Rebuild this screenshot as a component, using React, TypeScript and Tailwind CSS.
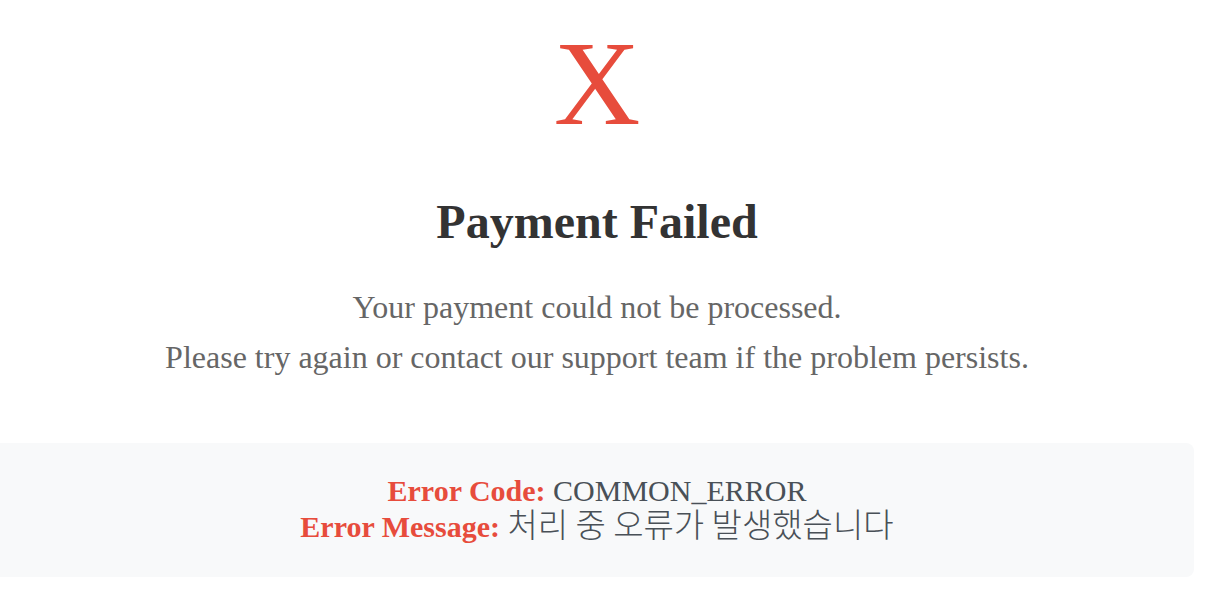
export default function App() {
  return (
    <div className="w-[1194px] bg-white text-center font-['Liberation_Serif','Noto_Sans_CJK_KR',serif]">
      <div className="mt-[24px] text-[120px] leading-none text-[#e74c3c]">X</div>

      <h1 className="mt-[54px] text-[48px] font-bold leading-none text-[#333333]">Payment Failed</h1>

      <p className="mt-[36px] text-[32px] leading-[50px] text-[#666666]">
        Your payment could not be processed.
        <br />
        Please try again or contact our support team if the problem persists.
      </p>

      <div className="mt-[61px] rounded-r-lg bg-[#f8f9fa] pt-[30px] pb-[32px] text-[30px] leading-[36px] text-[#495057]">
        <div>
          <span className="font-bold text-[#e74c3c]">Error Code:</span> COMMON_ERROR
        </div>
        <div>
          <span className="font-bold text-[#e74c3c]">Error Message:</span>{" "}
          <span className="inline-block font-['Noto_Sans_CJK_KR',sans-serif] text-[33px] font-light leading-[28px]">
            처리 중 오류가 발생했습니다
          </span>
        </div>
      </div>
    </div>
  );
}
